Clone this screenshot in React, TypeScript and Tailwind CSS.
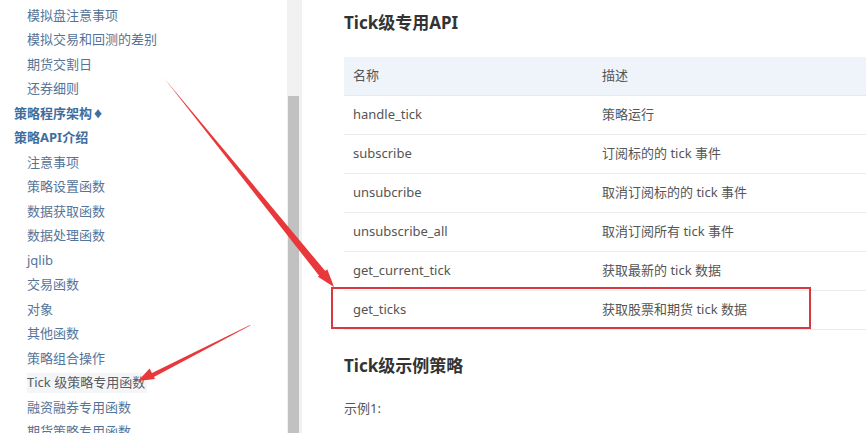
import React from "react";

const font = { fontFamily: '"Noto Sans", "Noto Sans CJK SC", sans-serif' };

type Item = { t: string; bold?: boolean; sel?: boolean; dia?: boolean };
const items: Item[] = [
  { t: "模拟盘注意事项" },
  { t: "模拟交易和回测的差别" },
  { t: "期货交割日" },
  { t: "还券细则" },
  { t: "策略程序架构", bold: true, dia: true },
  { t: "策略API介绍", bold: true },
  { t: "注意事项" },
  { t: "策略设置函数" },
  { t: "数据获取函数" },
  { t: "数据处理函数" },
  { t: "jqlib" },
  { t: "交易函数" },
  { t: "对象" },
  { t: "其他函数" },
  { t: "策略组合操作" },
  { t: "Tick 级策略专用函数", sel: true },
  { t: "融资融券专用函数" },
  { t: "期货策略专用函数" },
];

const rows = [
  ["handle_tick", "策略运行"],
  ["subscribe", "订阅标的的 tick 事件"],
  ["unsubcribe", "取消订阅标的的 tick 事件"],
  ["unsubscribe_all", "取消订阅所有 tick 事件"],
  ["get_current_tick", "获取最新的 tick 数据"],
  ["get_ticks", "获取股票和期货 tick 数据"],
];

export default function App() {
  return (
    <div className="relative w-[866px] h-[433px] overflow-hidden bg-white flex" style={font}>
      {/* Sidebar */}
      <div className="w-[287px] shrink-0 pt-[3px] text-[13px]">
        {items.map((it, i) => (
          <div key={i} className={`h-[24.5px] flex items-center ${it.bold ? "pl-[14px]" : "pl-[27px]"}`}>
            <span
              className={
                it.bold
                  ? "font-bold text-[#3f6d9e]"
                  : it.sel
                  ? "text-[#555c66] bg-[#f4f5f7] pr-[2px]"
                  : "text-[#557499]"
              }
            >
              {it.t}
              {it.dia && <span className="text-[10px] ml-[1px]">♦</span>}
            </span>
          </div>
        ))}
      </div>
      {/* Scrollbar */}
      <div className="w-[15px] shrink-0 bg-[#f1f1f1] flex flex-col">
        <div className="mt-[96px] ml-[1px] w-[11px] flex-1 bg-[#c1c1c1]" />
      </div>
      {/* Main */}
      <div className="flex-1 pl-[42px] pt-[10px] text-[13px] text-[#555]">
        <div className="h-[25px] flex items-center text-[17px] font-bold text-[#333]">Tick级专用API</div>
        <div className="mt-[22px] w-[600px]">
          <div className="h-[39px] flex items-center bg-[#eff3fa] border-b border-[#e6e9ee]">
            <div className="w-[249px] pl-[9px]">名称</div>
            <div className="pl-[9px]">描述</div>
          </div>
          {rows.map(([a, b], i) => (
            <div key={i} className="h-[39px] flex items-center border-b border-[#ebebeb]">
              <div className="w-[249px] pl-[9px]">{a}</div>
              <div className="pl-[9px]">{b}</div>
            </div>
          ))}
        </div>
        <div className="mt-[23px] h-[25px] flex items-center text-[17px] font-bold text-[#333]">Tick级示例策略</div>
        <div className="mt-[21px] h-[20px] flex items-center">示例1:</div>
      </div>
      {/* Red highlight box */}
      <div className="absolute left-[331px] top-[287px] w-[480px] h-[42px] border-2 border-[#d8383f]" />
      {/* Arrows */}
      <svg className="absolute left-0 top-0" width="866" height="433" viewBox="0 0 866 433">
        <polygon points="163.8,77.8 164.2,78.2 326.5,272.5 320.5,277.5" fill="#e8383b" />
        <polygon points="334,287 317.9,276.8 327.3,269.2" fill="#e8383b" />
        <polygon points="250,325 250.3,325.6 152,378 150,374" fill="#e8383b" />
        <polygon points="138,381 149.6,368.4 155,379" fill="#e8383b" />
      </svg>
    </div>
  );
}
